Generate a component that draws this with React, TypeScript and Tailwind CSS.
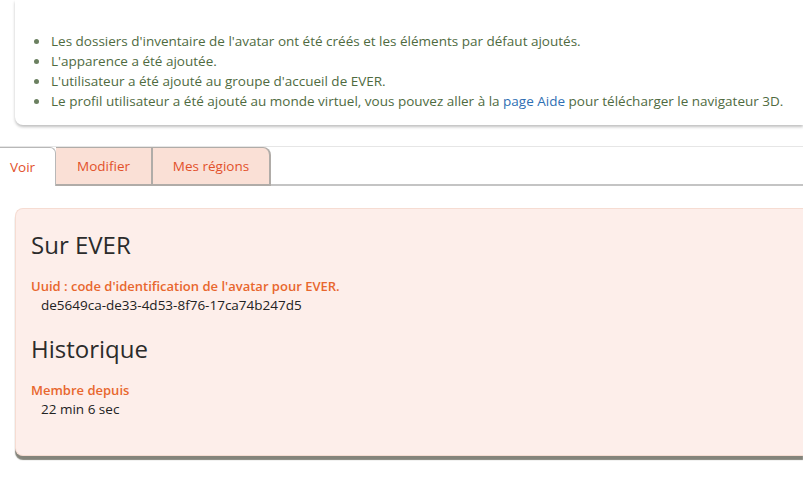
import React from "react";

const font = { fontFamily: '"Open Sans", "Noto Sans", sans-serif' };

const messages: React.ReactNode[] = [
  "Les dossiers d'inventaire de l'avatar ont été créés et les éléments par défaut ajoutés.",
  "L'apparence a été ajoutée.",
  "L'utilisateur a été ajouté au groupe d'accueil de EVER.",
  <>
    Le profil utilisateur a été ajouté au monde virtuel, vous pouvez aller à la{" "}
    <a className="text-[#2f6fb3]">page Aide</a> pour télécharger le navigateur 3D.
  </>,
];

const App = () => {
  return (
    <div className="w-[803px] h-[478px] overflow-hidden bg-white" style={font}>
      <div className="ml-[15px] pt-[31px] pb-[14px] rounded-bl-lg bg-white shadow-[0_2px_3px_rgba(0,0,0,0.25)]">
        <ul className="list-disc pl-[35px] text-[13.5px] leading-[20px] text-[#4f6b3f] marker:text-[#6b8060]">
          {messages.map((m, i) => (
            <li key={i} className="pl-[1px]">
              {m}
            </li>
          ))}
        </ul>
      </div>

      <div className="mt-[21px] flex items-end border-t border-[#e6e6e6]">
        <div className="h-[39px] w-[56px] -mt-[1px] flex items-center pl-[10px] bg-white border-t border-r border-[#b8b8b8] rounded-tr-md text-[13.5px] text-[#e2502a]">
          Voir
        </div>
        <div className="h-[39px] w-[97px] -mt-[1px] flex items-center justify-center pt-[1px] bg-[#fae0d6] border-t border-r-2 border-b-2 border-[#b0aca8] text-[13.5px] text-[#e2502a]">
          Modifier
        </div>
        <div className="h-[39px] w-[118px] -mt-[1px] flex items-center justify-center pt-[1px] bg-[#fae0d6] border-t border-r-2 border-b-2 border-[#b0aca8] rounded-tr-lg text-[13.5px] text-[#e2502a]">
          Mes régions
        </div>
        <div className="flex-1 h-[39px] border-b-2 border-[#c4c4c4]" />
      </div>

      <div className="ml-[15px] mt-[22px] h-[248px] rounded-l-lg border border-r-0 border-[#f6dcd2] bg-[#fdeeea] px-[15px] pt-[20px] shadow-[0_4px_1px_rgba(110,110,100,0.85)]">
        <h2 className="text-[24px] leading-[32px] font-medium text-[#2b2b2b]">Sur EVER</h2>
        <div className="mt-[16px] text-[13px] leading-[19px]">
          <div className="font-semibold text-[#e8672e]">Uuid : code d'identification de l'avatar pour EVER.</div>
          <div className="pl-[10px] text-[13.5px] text-[#222]">de5649ca-de33-4d53-8f76-17ca74b247d5</div>
        </div>
        <h2 className="mt-[18px] text-[24px] leading-[32px] font-medium text-[#2b2b2b]">Historique</h2>
        <div className="mt-[16px] text-[13px] leading-[19px]">
          <div className="font-semibold text-[#e8672e]">Membre depuis</div>
          <div className="pl-[10px] text-[13.5px] text-[#222]">22 min 6 sec</div>
        </div>
      </div>
    </div>
  );
};

export default App;
